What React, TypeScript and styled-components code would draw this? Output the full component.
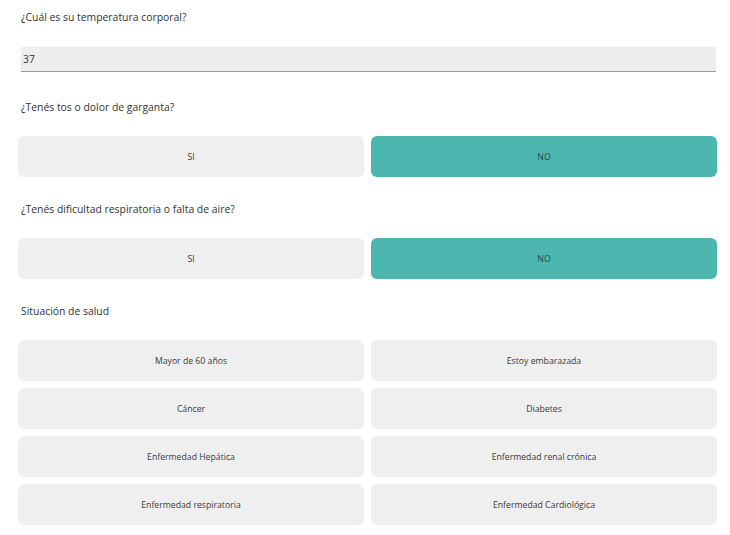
import styled, { createGlobalStyle } from "styled-components";

const GlobalStyle = createGlobalStyle`
  body {
    margin: 0;
    background: #ffffff;
    font-family: "Open Sans", "Noto Sans", sans-serif;
  }
`;

const healthOptions = [
  "Mayor de 60 años",
  "Estoy embarazada",
  "Cáncer",
  "Diabetes",
  "Enfermedad Hepática",
  "Enfermedad renal crónica",
  "Enfermedad respiratoria",
  "Enfermedad Cardiológica",
];

const App = () => {
  return (
    <>
      <GlobalStyle />
      <Form>
        <Question>¿Cuál es su temperatura corporal?</Question>
        <TextInput defaultValue="37" />

        <Question>¿Tenés tos o dolor de garganta?</Question>
        <Choices>
          <Choice>SI</Choice>
          <Choice selected>NO</Choice>
        </Choices>

        <Question>¿Tenés dificultad respiratoria o falta de aire?</Question>
        <Choices>
          <Choice>SI</Choice>
          <Choice selected>NO</Choice>
        </Choices>

        <Question>Situación de salud</Question>
        <HealthGrid>
          {healthOptions.map((label) => (
            <Choice key={label}>{label}</Choice>
          ))}
        </HealthGrid>
      </Form>
    </>
  );
};

export default App;

const Form = styled.div`
  display: flex;
  flex-direction: column;
  padding: 0 13px 0 18px;
`;

const Question = styled.p`
  margin: 9px 0 0 3px;
  height: 16px;
  line-height: 16px;
  font-size: 10.4px;
  color: #333333;
`;

const TextInput = styled.input`
  margin: 22px 1px 18px 3px;
  height: 25px;
  box-sizing: border-box;
  border: none;
  border-bottom: 1px solid #9a9a9a;
  background: #eeeeee;
  padding: 0 2px;
  font-family: inherit;
  font-size: 10.4px;
  color: #333333;
  outline: none;
`;

const Choices = styled.div`
  display: grid;
  grid-template-columns: 1fr 1fr;
  gap: 7px;
  margin: 21px 0 15px;
`;

const HealthGrid = styled(Choices)`
  margin: 21px 0 0;
`;

const Choice = styled.button<{ selected?: boolean }>`
  height: 41px;
  border: none;
  border-radius: 6px;
  background: ${({ selected }) => (selected ? "#4db6ae" : "#efefef")};
  color: ${({ selected }) => (selected ? "#1f4d49" : "#3a3a3a")};
  font-family: inherit;
  font-size: 8.7px;
  cursor: pointer;
`;
